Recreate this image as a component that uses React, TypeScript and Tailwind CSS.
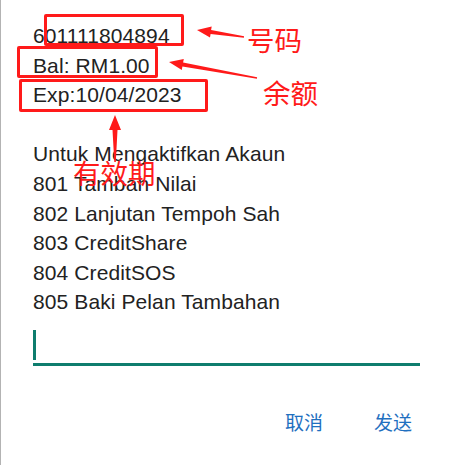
import React from "react";

function arrow(tx: number, ty: number, sx: number, sy: number, headLen: number, headW: number, shaftW: number, tailW: number) {
  const dx = sx - tx;
  const dy = sy - ty;
  const len = Math.hypot(dx, dy);
  const ux = dx / len;
  const uy = dy / len;
  const px = -uy;
  const py = ux;
  const bx = tx + ux * headLen;
  const by = ty + uy * headLen;
  const pts = [
    [tx, ty],
    [bx + px * headW / 2, by + py * headW / 2],
    [bx + px * shaftW / 2, by + py * shaftW / 2],
    [sx + px * tailW / 2, sy + py * tailW / 2],
    [sx - px * tailW / 2, sy - py * tailW / 2],
    [bx - px * shaftW / 2, by - py * shaftW / 2],
    [bx - px * headW / 2, by - py * headW / 2],
  ];
  return pts.map((p) => p.map((v) => v.toFixed(1)).join(",")).join(" ");
}

const lines = [
  "601111804894",
  "Bal: RM1.00",
  "Exp:10/04/2023",
  "\u00a0",
  "Untuk Mengaktifkan Akaun",
  "801 Tambah Nilai",
  "802 Lanjutan Tempoh Sah",
  "803 CreditShare",
  "804 CreditSOS",
  "805 Baki Pelan Tambahan",
];

export default function App() {
  return (
    <div className="relative w-[450px] h-[465px] overflow-hidden bg-white border-l border-[#b3b3b3]">
      <div className="flex flex-col pl-[32px] pr-[30px] pt-[21px]">
        <div
          className="flex flex-col text-[21px] leading-[29.6px] tracking-[0.1px] text-[#222222]"
          style={{ fontFamily: '"Liberation Sans", Arial, sans-serif' }}
        >
          {lines.map((l, i) => (
            <div key={i}>{l}</div>
          ))}
        </div>
        <div className="mt-[13px] flex h-[36px] items-start border-b-[3px] border-[#0e7d6e]">
          <div className="h-[30px] w-[3px] bg-[#0e7d6e]" />
        </div>
        <div
          className="mt-[46px] flex justify-end gap-[51px] pr-[8px] text-[19px] leading-none text-[#1f70c0]"
          style={{ fontFamily: '"Noto Sans CJK SC", sans-serif' }}
        >
          <span>取消</span>
          <span>发送</span>
        </div>
      </div>

      {/* annotation boxes */}
      <div className="absolute left-[43px] top-[14px] h-[32px] w-[140px] rounded-[2px] border-[3px] border-[#ff1a1a]" />
      <div className="absolute left-[16px] top-[46px] h-[32px] w-[141px] rounded-[2px] border-[3px] border-[#ff1a1a]" />
      <div className="absolute left-[18px] top-[79px] h-[33px] w-[189px] rounded-[2px] border-[3px] border-[#ff1a1a]" />

      <div
        className="absolute left-[246px] top-[26px] text-[27.5px] leading-none text-[#ff1a1a]"
        style={{ fontFamily: '"Noto Sans CJK SC", sans-serif' }}
      >
        号码
      </div>
      <div
        className="absolute left-[262px] top-[79px] text-[27.5px] leading-none text-[#ff1a1a]"
        style={{ fontFamily: '"Noto Sans CJK SC", sans-serif' }}
      >
        余额
      </div>
      <div
        className="absolute left-[72px] top-[159px] text-[27.5px] leading-none text-[#ff1a1a]"
        style={{ fontFamily: '"Noto Sans CJK SC", sans-serif' }}
      >
        有效期
      </div>

      <svg className="absolute left-0 top-0" width="450" height="465" viewBox="0 0 450 465">
        <polygon points={arrow(196, 30, 243, 37, 14, 11, 4, 1.5)} fill="#ff1a1a" />
        <polygon points={arrow(168, 62, 256, 78, 14, 11, 4, 1.5)} fill="#ff1a1a" />
        <polygon points={arrow(114, 115, 114, 162, 15, 12, 5, 1.5)} fill="#ff1a1a" />
      </svg>
    </div>
  );
}
